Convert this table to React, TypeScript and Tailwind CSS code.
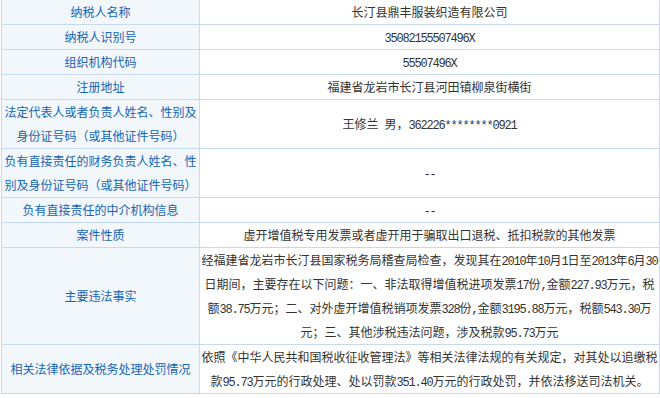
import React from "react";

const T = ({ s }: { s: string }) => (
  <>
    {s.split(/([\x20-\x7e]+)/).map((p, i) =>
      /[\x20-\x7e]/.test(p) ? (
        <span key={i} className="font-['Liberation_Mono',monospace] tracking-[-1.2px] leading-[0]">
          {p}
        </span>
      ) : (
        <React.Fragment key={i}>{p}</React.Fragment>
      )
    )}
  </>
);

const Lines = ({ lines }: { lines: string[] }) => (
  <div className="flex flex-col items-center">
    {lines.map((l, i) => (
      <div key={i} className="h-[24px] leading-[24px] whitespace-nowrap">
        <T s={l} />
      </div>
    ))}
  </div>
);

type Row = { label: string[]; value: string[]; last?: boolean };

const rows: Row[] = [
  { label: ["纳税人名称"], value: ["长汀县鼎丰服装织造有限公司"] },
  { label: ["纳税人识别号"], value: ["35082155507496X"] },
  { label: ["组织机构代码"], value: ["55507496X"] },
  { label: ["注册地址"], value: ["福建省龙岩市长汀县河田镇柳泉街横街"] },
  {
    label: ["法定代表人或者负责人姓名、性别及", "身份证号码（或其他证件号码）"],
    value: ["王修兰 男，362226********0921"],
  },
  {
    label: ["负有直接责任的财务负责人姓名、性", "别及身份证号码（或其他证件号码）"],
    value: ["--"],
  },
  { label: ["负有直接责任的中介机构信息"], value: ["--"] },
  { label: ["案件性质"], value: ["虚开增值税专用发票或者虚开用于骗取出口退税、抵扣税款的其他发票"] },
  {
    label: ["主要违法事实"],
    value: [
      "经福建省龙岩市长汀县国家税务局稽查局检查，发现其在2010年10月1日至2013年6月30",
      "日期间，主要存在以下问题：一、非法取得增值税进项发票17份,金额227.93万元，税",
      "额38.75万元；二、对外虚开增值税销项发票328份,金额3195.88万元，税额543.30万",
      "元；三、其他涉税违法问题，涉及税款95.73万元",
    ],
  },
  {
    label: ["相关法律依据及税务处理处罚情况"],
    value: [
      "依照《中华人民共和国税收征收管理法》等相关法律法规的有关规定，对其处以追缴税",
      "款95.73万元的行政处理、处以罚款351.40万元的行政处罚，并依法移送司法机关。",
    ],
    last: true,
  },
];

export default function App() {
  return (
    <div className="w-[660px] h-[398px] bg-white overflow-hidden font-['Noto_Sans_CJK_SC',sans-serif] text-[12px] leading-[24px]">
      <div className="ml-[1px] mt-[-1px] w-[659px] border border-[#c6daef] flex flex-col">
        {rows.map((r, i) => (
          <div key={i} className={r.last ? "flex" : "flex border-b border-[#c6daef]"}>
            <div className="w-[198px] shrink-0 border-r border-[#c6daef] bg-[#f2f7fc] text-[#1763b3] flex items-center justify-center">
              <Lines lines={r.label} />
            </div>
            <div className="flex-1 min-w-0 text-[#333333] flex items-center justify-center">
              <Lines lines={r.value} />
            </div>
          </div>
        ))}
      </div>
    </div>
  );
}
